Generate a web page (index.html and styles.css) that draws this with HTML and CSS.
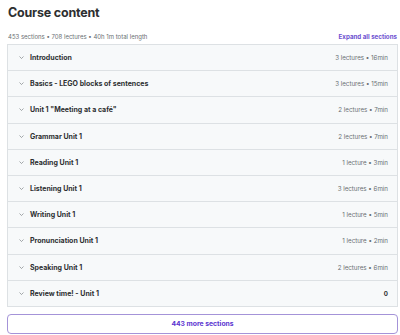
FILE: index.html
```html
<!DOCTYPE html>
<html>
<head>
<meta charset="utf-8">
<link rel="stylesheet" href="styles.css">
</head>
<body>
<div class="page">
  <h2 class="title">Course content</h2>
  <div class="meta">
    <span class="stats">453 sections • 708 lectures • 40h 1m total length</span>
    <span class="expand">Expand all sections</span>
  </div>
  <div class="list">
    <div class="row"><span class="chev"><svg viewBox="0 0 10 6" width="5" height="3"><path d="M1 1l4 4 4-4" fill="none" stroke="currentColor" stroke-width="1.2"/></svg></span><span class="name">Introduction</span><span class="info">3 lectures • 16min</span></div>
    <div class="row"><span class="chev"><svg viewBox="0 0 10 6" width="5" height="3"><path d="M1 1l4 4 4-4" fill="none" stroke="currentColor" stroke-width="1.2"/></svg></span><span class="name">Basics - LEGO blocks of sentences</span><span class="info">3 lectures • 15min</span></div>
    <div class="row"><span class="chev"><svg viewBox="0 0 10 6" width="5" height="3"><path d="M1 1l4 4 4-4" fill="none" stroke="currentColor" stroke-width="1.2"/></svg></span><span class="name">Unit 1 "Meeting at a café"</span><span class="info">2 lectures • 7min</span></div>
    <div class="row"><span class="chev"><svg viewBox="0 0 10 6" width="5" height="3"><path d="M1 1l4 4 4-4" fill="none" stroke="currentColor" stroke-width="1.2"/></svg></span><span class="name">Grammar Unit 1</span><span class="info">2 lectures • 7min</span></div>
    <div class="row"><span class="chev"><svg viewBox="0 0 10 6" width="5" height="3"><path d="M1 1l4 4 4-4" fill="none" stroke="currentColor" stroke-width="1.2"/></svg></span><span class="name">Reading Unit 1</span><span class="info">1 lecture • 3min</span></div>
    <div class="row"><span class="chev"><svg viewBox="0 0 10 6" width="5" height="3"><path d="M1 1l4 4 4-4" fill="none" stroke="currentColor" stroke-width="1.2"/></svg></span><span class="name">Listening Unit 1</span><span class="info">3 lectures • 6min</span></div>
    <div class="row"><span class="chev"><svg viewBox="0 0 10 6" width="5" height="3"><path d="M1 1l4 4 4-4" fill="none" stroke="currentColor" stroke-width="1.2"/></svg></span><span class="name">Writing Unit 1</span><span class="info">1 lecture • 5min</span></div>
    <div class="row"><span class="chev"><svg viewBox="0 0 10 6" width="5" height="3"><path d="M1 1l4 4 4-4" fill="none" stroke="currentColor" stroke-width="1.2"/></svg></span><span class="name">Pronunciation Unit 1</span><span class="info">1 lecture • 2min</span></div>
    <div class="row"><span class="chev"><svg viewBox="0 0 10 6" width="5" height="3"><path d="M1 1l4 4 4-4" fill="none" stroke="currentColor" stroke-width="1.2"/></svg></span><span class="name">Speaking Unit 1</span><span class="info">2 lectures • 6min</span></div>
    <div class="row"><span class="chev"><svg viewBox="0 0 10 6" width="5" height="3"><path d="M1 1l4 4 4-4" fill="none" stroke="currentColor" stroke-width="1.2"/></svg></span><span class="name">Review time! - Unit 1</span><span class="info bold">0</span></div>
  </div>
  <div class="more">443 more sections</div>
</div>
</body>
</html>
```
FILE: styles.css
```css
* { box-sizing: border-box; }
html, body { margin: 0; padding: 0; background: #fff; }
body { font-family: Inter, "Noto Sans", "Liberation Sans", sans-serif; color: #2d2f31; }
.page { padding: 4px 2px 0 7px; width: 400px; }
.title { margin: 0 0 0 1px; font-size: 12.5px; font-weight: 700; line-height: 18px; letter-spacing: -0.2px; color: #2d2f31; }
.meta { display: flex; justify-content: space-between; align-items: center; margin-top: 8px; height: 12px; padding: 0 1px 0 1px; }
.stats { font-size: 6px; color: #6a6f73; }
.expand { font-size: 6.2px; font-weight: 700; color: #6d4fd0; }
.list { margin-top: 2px; border: 1px solid #dde1e4; border-bottom: none; }
.row { display: flex; align-items: center; height: 26.2px; background: #f7f9fa; border-bottom: 1px solid #dde1e4; padding: 0 9px 0 11px; }
.chev { width: 11px; color: #6a6f73; display: flex; align-items: center; }
.name { font-size: 7px; font-weight: 700; flex: 1; color: #2d2f31; }
.info { font-size: 6.2px; color: #6a6f73; }
.info.bold { font-weight: 700; color: #2d2f31; }
.more { margin-top: 7px; height: 20px; border: 1px solid #a493d8; border-radius: 4px; display: flex; align-items: center; justify-content: center; font-size: 6.8px; font-weight: 700; color: #5b35d0; }
```
